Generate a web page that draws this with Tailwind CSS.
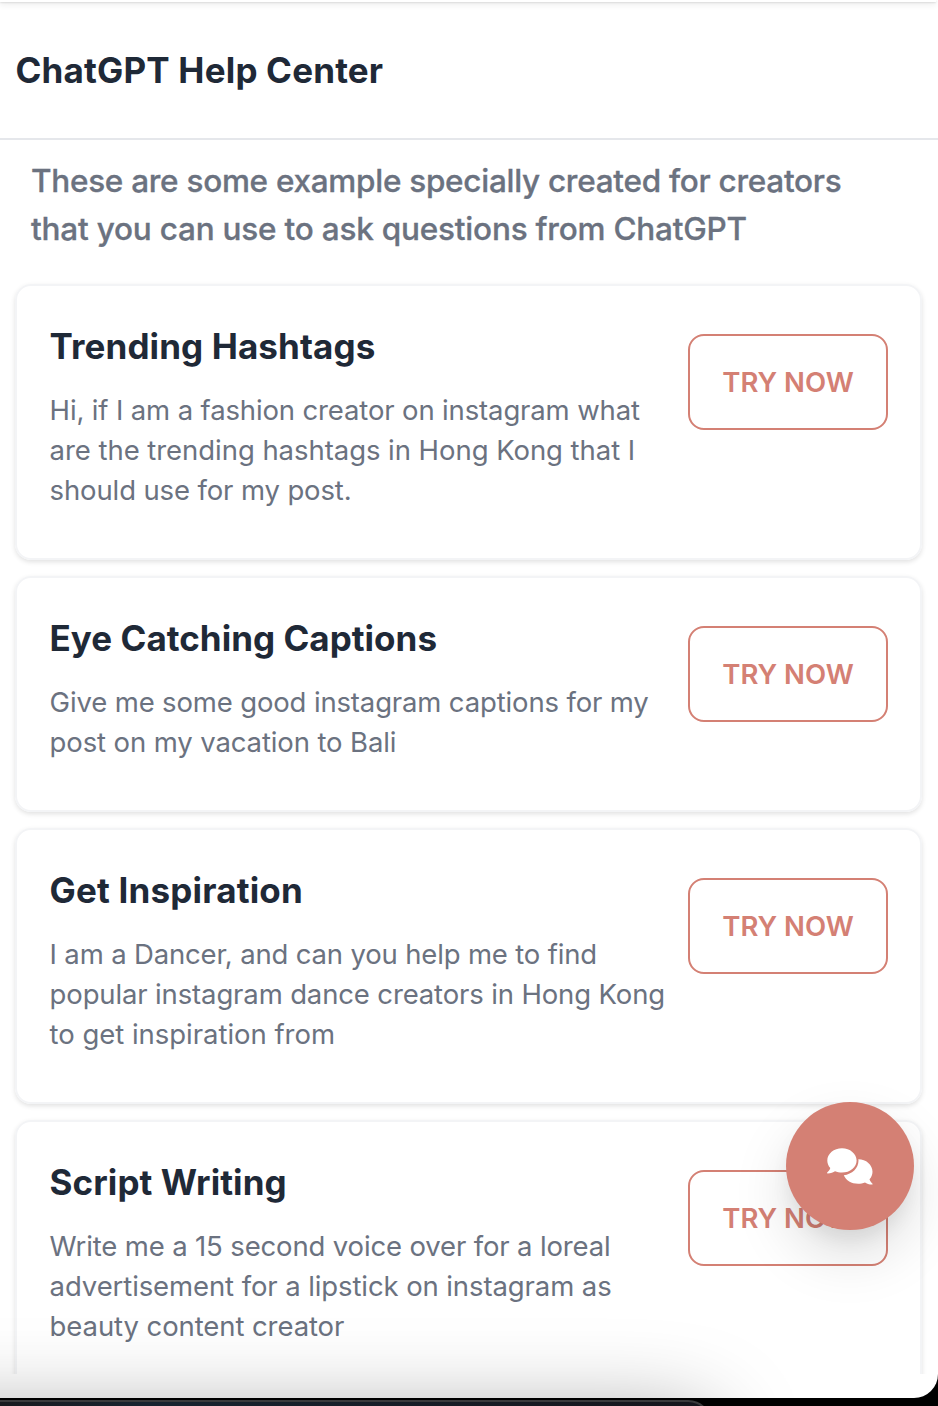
<!DOCTYPE html>
<html lang="en">
<head>
<meta charset="utf-8">
<title>ChatGPT Help Center</title>
<script src="https://cdn.jsdelivr.net/npm/@tailwindcss/browser@4"></script>
</head>
<body class="bg-black font-[Inter,sans-serif]">
<div class="relative h-[1406px] w-[938px] overflow-hidden bg-black">
  <div class="flex h-[1398px] flex-col overflow-hidden rounded-br-[24px] bg-white">
    <div class="h-[2px] w-[936px] shrink-0 bg-white shadow-[0_2px_6px_rgba(0,0,0,0.16),0_1px_2px_rgba(0,0,0,0.12)]"></div>
    <header class="flex h-[138px] shrink-0 items-center border-b-2 border-[#e5e7eb] pl-[15.5px]">
      <h1 class="whitespace-nowrap text-[35px] font-bold tracking-[0.18px] text-[#1f2937]">ChatGPT Help Center</h1>
    </header>
    <main class="flex h-[1234px] flex-col overflow-hidden pl-[15px] pr-4">
      <p class="mb-[31px] mt-[17px] whitespace-nowrap pl-4 text-[31.5px] font-medium leading-[48px] text-[#6b7280] [-webkit-text-stroke:0.3px_#6b7280]"><span class="tracking-[-0.28px]">These are some example specially created for creators</span><br><span class="tracking-[-0.21px]">that you can use to ask questions from ChatGPT</span></p>
      <div class="flex flex-col gap-4">
        <section class="flex h-[276px] shrink-0 items-start justify-between rounded-2xl border-2 border-[#f3f4f6] pl-[32.6px] pr-8 shadow-[0_2px_5px_rgba(0,0,0,0.12)]">
          <div class="whitespace-nowrap pt-8">
            <h2 class="mb-[15px] text-[35px] font-bold leading-[57px] tracking-[0.1px] text-[#1f2937]">Trending Hashtags</h2>
            <p class="text-[27.5px] leading-10 text-[#6b7280]"><span class="tracking-[-0.14px]">Hi, if I am a fashion creator on instagram what</span><br><span class="tracking-[-0.05px]">are the trending hashtags in Hong Kong that I</span><br><span class="tracking-[-0.13px]">should use for my post.</span></p>
          </div>
          <button class="mt-12 h-24 w-[200px] shrink-0 whitespace-nowrap rounded-2xl border-2 border-[#d48074] pt-0.5 text-[27.5px] font-semibold text-[#d48074]">TRY NOW</button>
        </section>
        <section class="flex h-[236px] shrink-0 items-start justify-between rounded-2xl border-2 border-[#f3f4f6] pl-[32.6px] pr-8 shadow-[0_2px_5px_rgba(0,0,0,0.12)]">
          <div class="whitespace-nowrap pt-8">
            <h2 class="mb-[15px] text-[35px] font-bold leading-[57px] tracking-[0.02px] text-[#1f2937]">Eye Catching Captions</h2>
            <p class="text-[27.5px] leading-10 text-[#6b7280]"><span class="tracking-[-0.15px]">Give me some good instagram captions for my</span><br><span class="tracking-[-0.12px]">post on my vacation to Bali</span></p>
          </div>
          <button class="mt-12 h-24 w-[200px] shrink-0 whitespace-nowrap rounded-2xl border-2 border-[#d48074] pt-0.5 text-[27.5px] font-semibold text-[#d48074]">TRY NOW</button>
        </section>
        <section class="flex h-[276px] shrink-0 items-start justify-between rounded-2xl border-2 border-[#f3f4f6] pl-[32.6px] pr-8 shadow-[0_2px_5px_rgba(0,0,0,0.12)]">
          <div class="whitespace-nowrap pt-8">
            <h2 class="mb-[15px] text-[35px] font-bold leading-[57px] tracking-[0.18px] text-[#1f2937]">Get Inspiration</h2>
            <p class="text-[27.5px] leading-10 text-[#6b7280]"><span class="tracking-[-0.17px]">I am a Dancer, and can you help me to find</span><br><span class="tracking-[-0.14px]">popular instagram dance creators in Hong Kong</span><br><span class="tracking-[-0.03px]">to get inspiration from</span></p>
          </div>
          <button class="mt-12 h-24 w-[200px] shrink-0 whitespace-nowrap rounded-2xl border-2 border-[#d48074] pt-0.5 text-[27.5px] font-semibold text-[#d48074]">TRY NOW</button>
        </section>
        <section class="flex h-[276px] shrink-0 items-start justify-between rounded-2xl border-2 border-[#f3f4f6] pl-[32.6px] pr-8 shadow-[0_2px_5px_rgba(0,0,0,0.12)]">
          <div class="whitespace-nowrap pt-8">
            <h2 class="mb-[15px] text-[35px] font-bold leading-[57px] tracking-[0.08px] text-[#1f2937]">Script Writing</h2>
            <p class="text-[27.5px] leading-10 text-[#6b7280]"><span class="tracking-[-0.15px]">Write me a 15 second voice over for a loreal</span><br><span class="tracking-[-0.1px]">advertisement for a lipstick on instagram as</span><br><span class="tracking-[-0.09px]">beauty content creator</span></p>
          </div>
          <button class="mt-12 h-24 w-[200px] shrink-0 whitespace-nowrap rounded-2xl border-2 border-[#d48074] pt-0.5 text-[27.5px] font-semibold text-[#d48074]">TRY NOW</button>
        </section>
      </div>
    </main>
  </div>
  <!-- Floating chat button -->
  <button class="absolute left-[786px] top-[1102px] flex size-32 items-center justify-center rounded-full bg-[#d48074] shadow-[0_26px_56px_rgba(0,0,0,0.13),0_12px_20px_-4px_rgba(0,0,0,0.08)]">
    <svg class="h-[37px] w-[46px]" viewBox="0 0 46 37" fill="#fff">
      <path d="M15 .2C6.900.2.300 5.600.300 12.500c0 2.900 1.100 5.500 3 7.600C2.900 22.200.900 23.900.200 24.500c-.3.400-.1.900.4.900 3.300 0 5.800-1.100 7.400-2.200 2.100.9 4.400 1.400 7 1.400 8.100 0 14.600-5.400 14.600-12.100S23.100.2 15 .2Z"/>
      <path d="M31.300 11.200c7.800 0 14.200 5.500 14.200 12.600 0 2.900-1.100 5.500-3 7.500.6 2.100 2.300 3.700 3 4.400.3.400.1.900-.4.900-3 0-5.500-1.100-7.100-2.200-2.100.9-4.400 1.400-6.900 1.400-6.600 0-12.200-3.500-14.300-8.500 8.300-.9 14.700-6.900 14.700-14.700 0-.5-.1-1-.2-1.400Z"/>
    </svg>
  </button>
  <!-- Dark window at the bottom edge, casting its shadow upward -->
  <div class="absolute inset-x-0 top-0 h-[1398px] overflow-hidden">
    <div class="absolute -left-[200px] top-[1400px] h-[300px] w-[910px] rounded-[24px] shadow-[0_18px_90px_rgba(0,0,0,0.39)]"></div>
  </div>
  <div class="absolute -left-10 top-[1400px] h-[60px] w-[752px] rounded-tr-[24px] border-t-2 border-r-2 border-[#3a3a3c] bg-linear-to-r from-[#17171a] via-[#172330] via-25% to-[#15151c]"></div>
</div>
</body>
</html>
